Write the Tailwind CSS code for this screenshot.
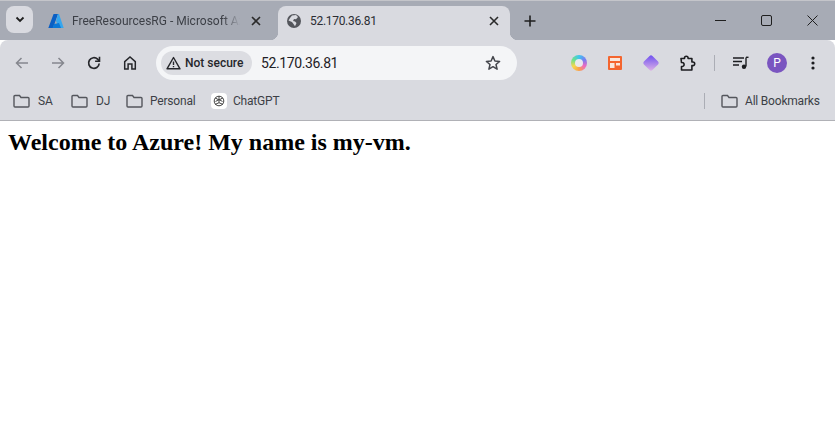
<!DOCTYPE html>
<html><head><meta charset="utf-8"><script src="https://cdn.jsdelivr.net/npm/@tailwindcss/browser@4"></script></head>
<body class="w-[835px] h-[444px] overflow-hidden bg-white font-['Roboto','Noto_Sans',sans-serif]">
<!-- tab strip -->
<div class="h-[40px] bg-[#a7abb5] border-t border-[#c4c5ca] flex items-start pt-[5px] pl-[6px] text-[#1f1f1f]">
  <div class="w-[27px] h-[27px] rounded-lg bg-[#d9dae0] flex items-center justify-center">
    <svg width="10" height="7" viewBox="0 0 10 7" fill="none" stroke="#1f1f1f" stroke-width="1.8"><path d="M1.500 1.500 5 5l3.500-3.500"/></svg>
  </div>
  <div class="w-[245px] h-[29px] flex items-center pl-[15px] shrink-0">
    <svg width="16" height="16" viewBox="0 0 16 16" class="shrink-0"><path d="M5.600 1h4.400L5 15H0.300z" fill="#0a5fc4"/><path d="M10 1h1l4.700 14H11L8 8z" fill="#35a6ee"/><path d="M6 11l5-1 2 5H4.500z" fill="#0b78d6"/></svg>
    <span class="ml-[8px] w-[168px] overflow-hidden whitespace-nowrap text-[12px] leading-[16px] text-[#3c3f46] [mask-image:linear-gradient(to_right,black_90%,transparent)]">FreeResourcesRG - Microsoft Azure</span>
    <svg width="10" height="10" viewBox="0 0 10 10" class="ml-[11px]" stroke="#2b2b2b" stroke-width="1.6"><path d="M1 1l8 8M9 1 1 9"/></svg>
  </div>
  <div class="relative w-[232px] h-[34px] bg-[#d9dae0] rounded-t-lg flex items-center pl-[9px] pb-[5px] shrink-0">
    <span class="absolute -left-[8px] bottom-0 w-[8px] h-[8px] bg-[radial-gradient(circle_at_0_0,transparent_8px,#d9dae0_8.5px)]"></span>
    <span class="absolute -right-[8px] bottom-0 w-[8px] h-[8px] bg-[radial-gradient(circle_at_100%_0,transparent_8px,#d9dae0_8.5px)]"></span>
    <svg width="14" height="14" viewBox="0 0 14 14" class="shrink-0"><circle cx="7" cy="7" r="7" fill="#54565c"/><path d="M5 1.500 9 1l2 2-2 2.200-2-.2L6 7l2 .5 1.500 1.500L8 12.300 6.500 10 5 8 1.500 6.500 3 4z" fill="#d9dae0"/></svg>
    <span class="ml-[9px] text-[12px] leading-[16px] tracking-[-0.3px] text-[#2b2d33]">52.170.36.81</span>
    <svg width="10" height="10" viewBox="0 0 10 10" class="ml-auto mr-[11px]" stroke="#2b2b2b" stroke-width="1.6"><path d="M1 1l8 8M9 1 1 9"/></svg>
  </div>
  <div class="w-[40px] h-[29px] flex items-center justify-center">
    <svg width="12" height="12" viewBox="0 0 12 12" stroke="#1f1f1f" stroke-width="1.6"><path d="M6 .5v11M.5 6h11"/></svg>
  </div>
  <div class="ml-auto flex h-[29px] items-center">
    <div class="w-[46px] flex justify-center"><svg width="11" height="11" viewBox="0 0 11 11" stroke="#1f1f1f" stroke-width="1"><path d="M0 5.500h11"/></svg></div>
    <div class="w-[46px] flex justify-center"><svg width="11" height="11" viewBox="0 0 11 11" fill="none" stroke="#1f1f1f" stroke-width="1"><rect x=".5" y=".5" width="10" height="10" rx="1.500"/></svg></div>
    <div class="w-[46px] flex justify-center"><svg width="11" height="11" viewBox="0 0 11 11" stroke="#1f1f1f" stroke-width="1"><path d="M.5.5l10 10M10.500.5l-10 10"/></svg></div>
  </div>
</div>
<!-- toolbar -->
<div class="bg-[#d9dae0] rounded-t-lg">
  <div class="h-[45px] flex items-center pl-[4px] pt-[1px]">
    <div class="w-[36px] flex justify-center"><svg width="16" height="16" viewBox="0 0 16 16" fill="none" stroke="#85878e" stroke-width="1.500"><path d="M14 8H2.500M7.500 3 2.500 8l5 5"/></svg></div>
    <div class="w-[36px] flex justify-center"><svg width="16" height="16" viewBox="0 0 16 16" fill="none" stroke="#85878e" stroke-width="1.500"><path d="M2 8h11.500M8.500 3l5 5-5 5"/></svg></div>
    <div class="w-[36px] flex justify-center"><svg width="16" height="16" viewBox="0 0 16 16" fill="none" stroke="#26272b" stroke-width="1.700"><path d="M13.200 8.500A5.300 5.300 0 1 1 11.600 4.200L13.300 6"/><path d="M13.500 1.800V6.200H9.100" stroke-width="1.600"/></svg></div>
    <div class="w-[36px] flex justify-center"><svg width="16" height="16" viewBox="0 0 16 16" fill="none" stroke="#26272b" stroke-width="1.500"><path d="M2.700 14V6.600L8 2l5.300 4.600V14H9.900V9H6.100v5z"/></svg></div>
    <div class="ml-[8px] w-[361px] h-[34px] rounded-full bg-[#f4f5f7] flex items-center pl-[5px] pr-[16px]">
      <div class="w-[91px] h-[24px] rounded-full bg-[#dcdde2] flex items-center pl-[5px]">
        <svg width="15" height="14" viewBox="0 0 15 14" fill="none" stroke="#26272b" stroke-width="1.400" class="shrink-0"><path d="M7.500 1.500 14 12.800H1z" stroke-linejoin="round"/><path d="M7.500 5.500v3.600M7.500 10v1.300"/></svg>
        <span class="ml-[4px] text-[12px] leading-[16px] font-medium text-[#26272b] whitespace-nowrap">Not secure</span>
      </div>
      <span class="ml-[9px] text-[14px] leading-[18px] tracking-[-0.4px] text-[#1f2126]">52.170.36.81</span>
      <svg width="16" height="16" viewBox="0 0 16 16" fill="none" stroke="#44464c" stroke-width="1.500" class="ml-auto"><path d="M8 1.600l1.900 4.400 4.700.4-3.600 3.100 1.100 4.700L8 11.700l-4.100 2.500L5 9.500 1.400 6.400l4.700-.4z" stroke-linejoin="round"/></svg>
    </div>
    <div class="ml-[44px] flex items-center">
      <div class="w-[36px] flex justify-center"><div class="w-[16px] h-[16px] rounded-full bg-[conic-gradient(#3ec6f0,#7a7df2,#f06ac0,#f9a24b,#f5d94e,#6ee08a,#3ec6f0)] flex items-center justify-center"><div class="w-[8px] h-[8px] rounded-full bg-[#e9e9ee]"></div></div></div>
      <div class="w-[36px] flex justify-center"><svg width="14" height="14" viewBox="0 0 14 14"><rect width="14" height="14" rx="1" fill="#f4652f"/><rect x="2" y="2" width="10" height="3" fill="#f9e7dc"/><rect x="2" y="7" width="4.500" height="5" fill="#f9e7dc"/><rect x="8" y="7" width="4" height="2.500" fill="#f9e7dc"/></svg></div>
      <div class="w-[36px] flex justify-center"><svg width="18" height="18" viewBox="0 0 18 18"><defs><linearGradient id="p" x1="0" y1="0" x2="1" y2="1"><stop offset="0" stop-color="#6a4df0"/><stop offset="1" stop-color="#e2b6e6"/></linearGradient></defs><rect x="3" y="3" width="12" height="12" rx="2" fill="url(#p)" transform="rotate(45 9 9)"/></svg></div>
      <div class="w-[36px] flex justify-center"><svg width="17" height="17" viewBox="0 0 17 17" fill="none" stroke="#1c1d20" stroke-width="1.600" stroke-linejoin="round"><path d="M2 3.500h3.500V3a1.800 1.800 0 0 1 3.600 0v.5h3.800v3.500h1a1.800 1.800 0 0 1 0 3.600h-1v4.400H2.500v-3.500c1.800.2 2.600-.8 2.600-2s-1-2.300-2.600-2z"/></svg></div>
      <div class="ml-[9px] w-px h-[16px] bg-[#abadb5]"></div>
      <div class="ml-[8px] w-[36px] flex justify-center"><svg width="16" height="14" viewBox="0 0 16 14" fill="none" stroke="#1c1d20" stroke-width="1.400"><path d="M0 2h11M0 5.500h9M0 9h6"/><path d="M13 1.500V10.500"/><circle cx="11" cy="10.800" r="2.200" fill="#1c1d20" stroke="none"/><path d="M13 1.300h2.500"/></svg></div>
      <div class="w-[36px] flex justify-center"><div class="w-[20px] h-[20px] rounded-full bg-[#7a55c0] flex items-center justify-center text-white text-[12px] leading-none">P</div></div>
      <div class="w-[36px] flex justify-center"><svg width="4" height="14" viewBox="0 0 4 14" fill="#1c1d20"><circle cx="2" cy="2" r="1.600"/><circle cx="2" cy="7" r="1.600"/><circle cx="2" cy="12" r="1.600"/></svg></div>
    </div>
  </div>
  <!-- bookmarks -->
  <div class="h-[36px] flex items-center pl-[13px] pb-[4px] border-b border-[#b0b1b6] text-[12px] leading-[16px] tracking-[-0.2px] text-[#3c3f46]">
    <svg width="17" height="14" viewBox="0 0 17 14" fill="none" stroke="#54565c" stroke-width="1.400"><path d="M1 2.500A1 1 0 0 1 2 1.500h4.500l1.500 2h7a1 1 0 0 1 1 1V12a1 1 0 0 1-1 1H2a1 1 0 0 1-1-1z"/></svg>
    <span class="ml-[8px] w-[33px]">SA</span>
    <svg width="17" height="14" viewBox="0 0 17 14" fill="none" stroke="#54565c" stroke-width="1.400"><path d="M1 2.500A1 1 0 0 1 2 1.500h4.500l1.500 2h7a1 1 0 0 1 1 1V12a1 1 0 0 1-1 1H2a1 1 0 0 1-1-1z"/></svg>
    <span class="ml-[8px] w-[30px]">DJ</span>
    <svg width="17" height="14" viewBox="0 0 17 14" fill="none" stroke="#54565c" stroke-width="1.400"><path d="M1 2.500A1 1 0 0 1 2 1.500h4.500l1.500 2h7a1 1 0 0 1 1 1V12a1 1 0 0 1-1 1H2a1 1 0 0 1-1-1z"/></svg>
    <span class="ml-[7px] w-[61px]">Personal</span>
    <div class="w-[16px] h-[16px] rounded-sm bg-white flex items-center justify-center"><svg width="12" height="12" viewBox="0 0 12 12" fill="none" stroke="#444" stroke-width="1"><circle cx="6" cy="6" r="4.800"/><path d="M6 1.200v6.500L2 9.500M6 7.700l4 1.800M2 2.800 6 5l4-2.200M2.500 6.500 6 4.500l3.500 2"/></svg></div>
    <span class="ml-[6px]">ChatGPT</span>
    <div class="ml-auto flex items-center w-[131px]">
      <div class="w-px h-[16px] bg-[#abadb5]"></div>
      <svg width="17" height="14" viewBox="0 0 17 14" fill="none" stroke="#54565c" stroke-width="1.400" class="ml-[16px]"><path d="M1 2.500A1 1 0 0 1 2 1.500h4.500l1.500 2h7a1 1 0 0 1 1 1V12a1 1 0 0 1-1 1H2a1 1 0 0 1-1-1z"/></svg>
      <span class="ml-[7px] whitespace-nowrap">All Bookmarks</span>
    </div>
  </div>
</div>
<h1 class="mt-[7px] ml-[8px] text-[24px] leading-[28px] font-bold text-black font-['Liberation_Serif',serif]">Welcome to Azure! My name is my-vm.</h1>
</body></html>
